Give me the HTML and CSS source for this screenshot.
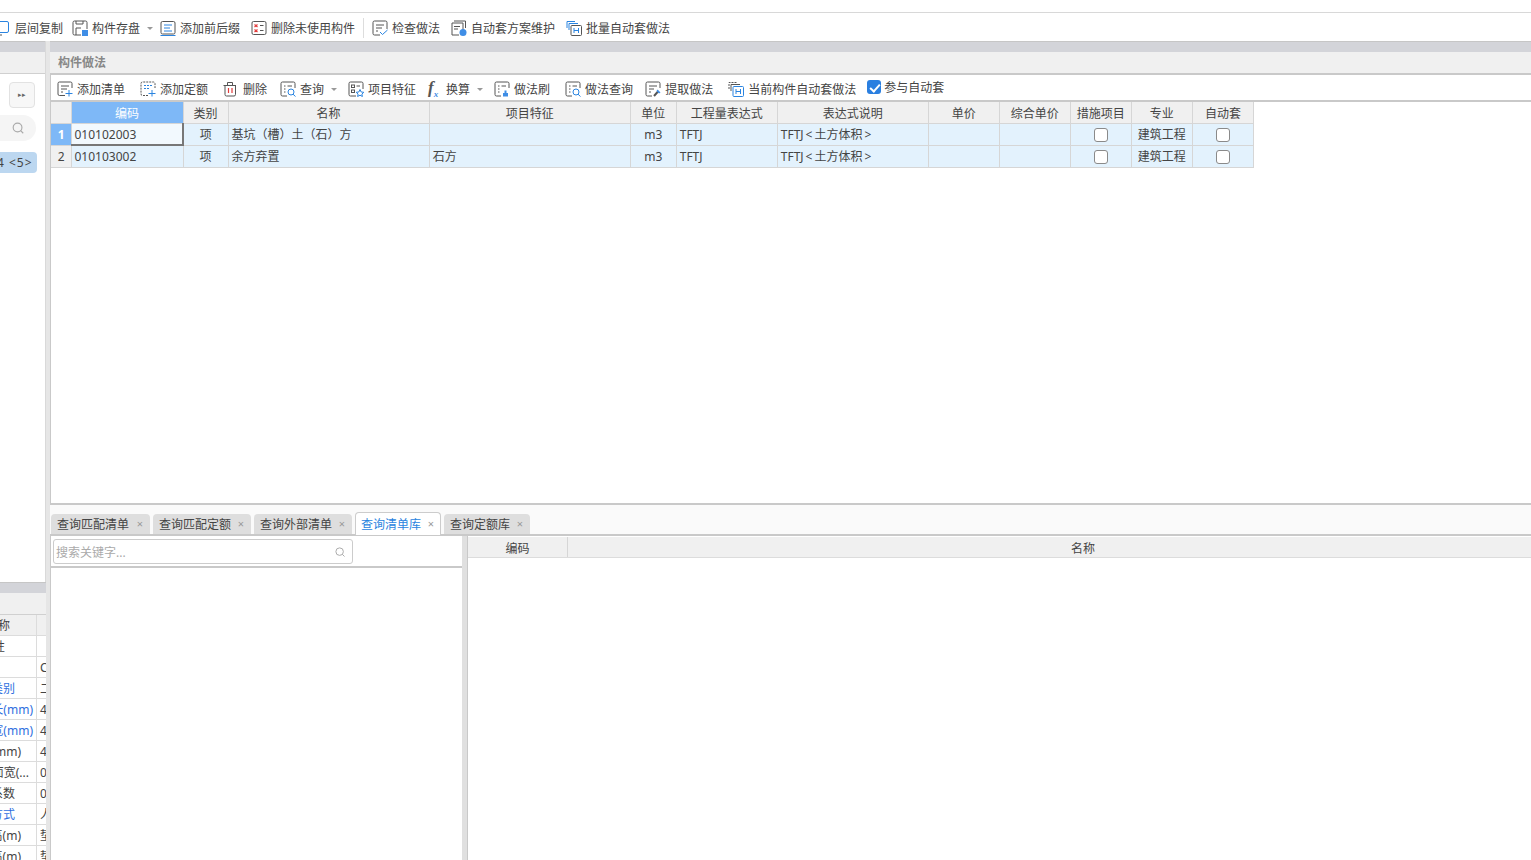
FILE: index.html
```html
<!DOCTYPE html>
<html lang="zh-CN">
<head>
  <meta charset="UTF-8">
  <title>构件做法</title>
  <link rel="stylesheet" href="styles.css">
</head>
<body>
  <svg class="icon-defs" width="0" height="0">
    <symbol id="i-copy" viewBox="0 0 16 16"><path class="b" d="M1 1.500h11a1.500 1.500 0 0 1 1.500 1.500v8a1.500 1.500 0 0 1-1.500 1.500H1"/><path class="g" d="M1 15h6"/></symbol>
    <symbol id="i-save" viewBox="0 0 16 16"><path class="g" d="M9 15H2.500A1.500 1.500 0 0 1 1 13.500v-11A1.500 1.500 0 0 1 2.500 1h11A1.500 1.500 0 0 1 15 2.500V9M4 15V8h5M4 1v3h7V1"/><path class="f" d="M10 10h6v6h-6z"/></symbol>
    <symbol id="i-affix" viewBox="0 0 16 16"><rect class="g" x="1" y="1.500" width="14" height="12.500" rx="1.500"/><path class="b" d="M4 5h8M4 8h6M4 11h8M.5 15.500h15"/></symbol>
    <symbol id="i-unused" viewBox="0 0 16 16"><rect class="g" x="1" y="1.500" width="14" height="13" rx="1.500"/><path class="r" d="M3.500 4.500l3 2.500m0-2.500l-3 2.500M3.500 9.500l3 2.500m0-2.500l-3 2.500"/><path class="g" d="M9 5.500h3.500M9 10.500h3.500"/></symbol>
    <symbol id="i-check" viewBox="0 0 16 16"><path class="g" d="M8 15H2.500A1.500 1.500 0 0 1 1 13.500v-11A1.500 1.500 0 0 1 2.500 1h11A1.500 1.500 0 0 1 15 2.500V9M4 5h8M4 8h6M4 11h2"/><path class="b" d="M8 12l2.500 2.500L15.500 10"/></symbol>
    <symbol id="i-scheme" viewBox="0 0 16 16"><path class="g" d="M3 1h11.500v7M1 3h11v8M1 3v12h7"/><path class="g" d="M3 6.500h6M3 9h4"/><circle class="f" cx="12" cy="12.500" r="3.500"/></symbol>
    <symbol id="i-batch" viewBox="0 0 16 16"><path class="b" d="M1 8V1.500h8M3 10V3.500h9"/><rect class="g" x="5" y="5.500" width="10.500" height="10" rx="1"/><path class="b" d="M8 8v5M12.500 8v5M8 10.500h4.500"/></symbol>
    <symbol id="i-list" viewBox="0 0 16 16"><path class="g" d="M8 14.500H2.500A1.500 1.500 0 0 1 1 13V2.500A1.500 1.500 0 0 1 2.500 1h11A1.500 1.500 0 0 1 15 2.500V7M4 5h8M4 8h6M4 11h2"/><path class="b" d="M12 9v6.500M8.500 12.500h7"/></symbol>
    <symbol id="i-quota" viewBox="0 0 16 16"><path class="g dash" d="M8 14.500H2.500A1.500 1.500 0 0 1 1 13V2.500A1.500 1.500 0 0 1 2.500 1h11A1.500 1.500 0 0 1 15 2.500V7"/><path class="b dash" d="M4 4.500h8M4 7.500h5"/><path class="b" d="M12 9v6.500M8.500 12.500h7"/></symbol>
    <symbol id="i-del" viewBox="0 0 16 16"><path class="g" d="M3 4.500h10.500v9A1.500 1.500 0 0 1 12 15H4.500A1.500 1.500 0 0 1 3 13.500zM1.500 4.500h12.500M5.500 4.500V1.500h5v3"/><path class="r" d="M6.500 7v5M10 7v5"/></symbol>
    <symbol id="i-query" viewBox="0 0 16 16"><path class="g" d="M7 15H2.500A1.500 1.500 0 0 1 1 13.500v-11A1.500 1.500 0 0 1 2.500 1h11A1.500 1.500 0 0 1 15 2.500V7M4 5h1.500M7.500 5H12M4 8h1.500M4 11h1.500"/><circle class="b" cx="11" cy="11" r="3"/><path class="b" d="M13 13.200l2.500 2.300"/></symbol>
    <symbol id="i-feature" viewBox="0 0 16 16"><path class="g" d="M8 15H2.500A1.500 1.500 0 0 1 1 13.500v-11A1.500 1.500 0 0 1 2.500 1h11A1.500 1.500 0 0 1 15 2.500V8"/><rect class="g" x="3.500" y="4" width="3" height="2.500"/><rect class="g" x="3.500" y="9" width="3" height="2.500"/><path class="g" d="M8.500 5H12"/><path class="b" d="M12 8.500l1.200 2.500 2.600.300-1.900 1.800.5 2.400-2.400-1.300-2.400 1.300.5-2.400-1.900-1.800 2.600-.300z"/></symbol>
    <symbol id="i-brush" viewBox="0 0 16 16"><path class="g" d="M7 15H2.500A1.500 1.500 0 0 1 1 13.500v-11A1.500 1.500 0 0 1 2.500 1h11A1.500 1.500 0 0 1 15 2.500V7M4 5h1.500M7.500 5H12M4 8h1.500M4 11h1.500"/><path class="f" d="M9 15.500v-3.500h1.500V9.500h2V12H14v3.500z"/></symbol>
    <symbol id="i-extract" viewBox="0 0 16 16"><path class="g" d="M7 15H2.500A1.500 1.500 0 0 1 1 13.500v-11A1.500 1.500 0 0 1 2.500 1h11A1.500 1.500 0 0 1 15 2.500V7M4 5h8M4 8h5M4 11h2"/><path class="g thick" d="M9 15l4.500-5"/><path class="f" d="M12.500 8.500l3 3-1.500 1-2.500-2.500z"/></symbol>
    <symbol id="i-current" viewBox="0 0 16 16"><path class="g dash" d="M1 8V1.500h8"/><path class="g" d="M3 10V3.500h9"/><rect class="b" x="5" y="5.500" width="10.500" height="10" rx="1"/><path class="b" d="M8 8v5M12.500 8v5M8 10.500h4.500"/></symbol>
    <symbol id="i-search" viewBox="0 0 16 16"><circle class="s" cx="7.500" cy="7.500" r="5"/><path class="s" d="M11 11l3 3"/></symbol>
  </svg>

  <div class="top-gap"></div>
  <div class="toolbar main-bar">
    <div class="tool gap-9"><svg class="ico"><use href="#i-copy"/></svg><span>层间复制</span></div>
    <div class="tool gap-10"><svg class="ico"><use href="#i-save"/></svg><span>构件存盘</span><i class="caret"></i></div>
    <div class="tool"><svg class="ico"><use href="#i-affix"/></svg><span>添加前后缀</span></div>
    <div class="tool"><svg class="ico"><use href="#i-unused"/></svg><span>删除未使用构件</span></div>
    <div class="sep"></div>
    <div class="tool"><svg class="ico"><use href="#i-check"/></svg><span>检查做法</span></div>
    <div class="tool"><svg class="ico"><use href="#i-scheme"/></svg><span>自动套方案维护</span></div>
    <div class="tool"><svg class="ico"><use href="#i-batch"/></svg><span>批量自动套做法</span></div>
  </div>

  <div class="workspace">
    <aside class="side">
      <div class="side-top">
        <div class="band"></div>
        <div class="panel-title"></div>
        <button class="collapse">▸▸</button>
        <div class="side-search"><svg class="search-ico"><use href="#i-search"/></svg></div>
        <div class="side-item">4 &lt;5&gt;</div>
      </div>
      <div class="side-bottom">
        <div class="band"></div>
        <div class="panel-title"></div>
        <div class="prop-row prop-head"><div class="prop-name end-10">名称</div><div class="prop-val"></div></div>
        <div class="prop-row"><div class="prop-name end-5">属性</div><div class="prop-val"></div></div>
        <div class="prop-row"><div class="prop-name"></div><div class="prop-val">C</div></div>
        <div class="prop-row"><div class="prop-name end-15 link">类别</div><div class="prop-val">二</div></div>
        <div class="prop-row"><div class="prop-name end-33 link">长(mm)</div><div class="prop-val">4</div></div>
        <div class="prop-row"><div class="prop-name end-33 link">宽(mm)</div><div class="prop-val">4</div></div>
        <div class="prop-row"><div class="prop-name end-21">高(mm)</div><div class="prop-val">4</div></div>
        <div class="prop-row"><div class="prop-name end-29">面宽(...</div><div class="prop-val">0</div></div>
        <div class="prop-row"><div class="prop-name end-15">系数</div><div class="prop-val">0</div></div>
        <div class="prop-row"><div class="prop-name end-15 link">方式</div><div class="prop-val">人</div></div>
        <div class="prop-row"><div class="prop-name end-21">高(m)</div><div class="prop-val">垫</div></div>
        <div class="prop-row"><div class="prop-name end-21">高(m)</div><div class="prop-val">垫</div></div>
      </div>
    </aside>
    <div class="splitter"></div>

    <main class="main">
      <div class="band"></div>
      <div class="panel-title">构件做法</div>
      <div class="toolbar sub-bar">
        <div class="tool gap-15"><svg class="ico"><use href="#i-list"/></svg><span>添加清单</span></div>
        <div class="tool"><svg class="ico"><use href="#i-quota"/></svg><span>添加定额</span></div>
        <div class="tool gap-13"><svg class="ico del-ico"><use href="#i-del"/></svg><span>删除</span></div>
        <div class="tool"><svg class="ico"><use href="#i-query"/></svg><span>查询</span><i class="caret"></i></div>
        <div class="tool narrow"><svg class="ico"><use href="#i-feature"/></svg><span>项目特征</span></div>
        <div class="tool"><em class="fx">f<sub>x</sub></em><span>换算</span><i class="caret"></i></div>
        <div class="tool gap-15"><svg class="ico"><use href="#i-brush"/></svg><span>做法刷</span></div>
        <div class="tool narrow"><svg class="ico"><use href="#i-query"/></svg><span>做法查询</span></div>
        <div class="tool gap-15"><svg class="ico"><use href="#i-extract"/></svg><span>提取做法</span></div>
        <div class="tool"><svg class="ico"><use href="#i-current"/></svg><span>当前构件自动套做法</span></div>
        <label class="auto-check"><i class="check-on"></i><span>参与自动套</span></label>
      </div>

      <div class="grid-area">
        <table class="grid">
          <colgroup>
            <col class="c-idx"><col class="c-code"><col class="c-type"><col class="c-name"><col class="c-name">
            <col class="c-unit"><col class="c-expr"><col class="c-desc"><col class="c-price"><col class="c-price">
            <col class="c-opt"><col class="c-opt"><col class="c-opt">
          </colgroup>
          <thead>
            <tr>
              <th></th><th class="active">编码</th><th>类别</th><th>名称</th><th>项目特征</th><th>单位</th>
              <th>工程量表达式</th><th>表达式说明</th><th>单价</th><th>综合单价</th><th>措施项目</th><th>专业</th><th>自动套</th>
            </tr>
          </thead>
          <tbody>
            <tr>
              <th class="active">1</th><td class="selected">010102003</td><td class="mid">项</td><td>基坑（槽）土（石）方</td><td></td><td class="mid">m3</td>
              <td>TFTJ</td><td>TFTJ&#8201;&lt;&#8201;土方体积&#8201;&gt;</td><td></td><td></td><td class="mid"><i class="box"></i></td><td class="mid">建筑工程</td><td class="mid"><i class="box"></i></td>
            </tr>
            <tr>
              <th>2</th><td>010103002</td><td class="mid">项</td><td>余方弃置</td><td>石方</td><td class="mid">m3</td>
              <td>TFTJ</td><td>TFTJ&#8201;&lt;&#8201;土方体积&#8201;&gt;</td><td></td><td></td><td class="mid"><i class="box"></i></td><td class="mid">建筑工程</td><td class="mid"><i class="box"></i></td>
            </tr>
          </tbody>
        </table>
      </div>

      <div class="tabs">
        <div class="tab"><span>查询匹配清单</span><b>×</b></div>
        <div class="tab"><span>查询匹配定额</span><b>×</b></div>
        <div class="tab"><span>查询外部清单</span><b>×</b></div>
        <div class="tab current"><span>查询清单库</span><b>×</b></div>
        <div class="tab short"><span>查询定额库</span><b>×</b></div>
      </div>

      <div class="lower">
        <div class="lib-left">
          <div class="lib-search">
            <div class="search-box"><span>搜索关键字...</span><svg class="search-ico"><use href="#i-search"/></svg></div>
          </div>
        </div>
        <div class="lib-right">
          <div class="lib-head"><div class="lib-code">编码</div><div class="lib-name">名称</div></div>
        </div>
      </div>
    </main>
  </div>
</body>
</html>
```

FILE: styles.css
```css
* {
  box-sizing: border-box;
}
html, body {
  margin: 0;
  height: 100%;
}
body {
  width: 1531px;
  height: 860px;
  overflow: hidden;
  display: flex;
  flex-direction: column;
  background: #fff;
  color: #444;
  font-family: "Noto Sans", "Noto Sans CJK SC", sans-serif;
  font-size: 12px;
  line-height: 16px;
}
.icon-defs {
  position: absolute;
}
.b, .g, .r, .s {
  fill: none;
  stroke-width: 1;
}
.b { stroke: #2a84e0; }
.g { stroke: #555; }
.r { stroke: #e23b3b; stroke-width: 1.200; }
.s { stroke: #aaa; stroke-width: 1.300; }
.f { fill: #3f8ee6; }
.dash { stroke-dasharray: 2 1; }
.thick { stroke-width: 2; }

.top-gap {
  height: 13px;
  flex: none;
  border-bottom: 1px solid #d8d8d8;
}

/* toolbars */
.toolbar {
  display: flex;
  align-items: center;
  flex: none;
  background: #fff;
}
.main-bar {
  height: 28px;
  margin-left: -5px;
  padding-top: 2px;
}
.tool {
  display: flex;
  align-items: center;
  margin-right: 11px;
  white-space: nowrap;
}
.tool span, .auto-check span {
  padding-top: 2px;
}
.tool.gap-9 { margin-right: 9px; }
.tool.gap-10 { margin-right: 10px; }
.ico {
  width: 16px;
  height: 16px;
  margin-right: 4px;
  flex: none;
}
.del-ico {
  margin-right: 5px;
}
.caret {
  width: 0;
  height: 0;
  margin: 1px -3px 0 7px;
  border: 3px solid transparent;
  border-top: 3px solid #999;
  border-bottom: 0;
}
.sep {
  width: 1px;
  height: 20px;
  margin: 0 8px 0 -3px;
  background: #ddd;
}

.workspace {
  flex: 1;
  display: flex;
  min-height: 0;
}
.band {
  height: 11px;
  flex: none;
  background: #d3d4d9;
  border-top: 1px solid #c6c6c6;
}
.panel-title {
  height: 23px;
  flex: none;
  padding: 3px 0 0 8px;
  background: #f0f0f0;
  border-bottom: 2px solid #c9c9c9;
  color: #888;
  font-weight: 700;
}

/* left panel */
.side {
  width: 46px;
  flex: none;
  display: flex;
  flex-direction: column;
  overflow: hidden;
}
.side-top {
  height: 541px;
  flex: none;
  position: relative;
  border-right: 1px solid #d9d9d9;
}
.side .panel-title {
  height: 22px;
  border-bottom: 1px solid #d0d0d0;
}
.collapse {
  display: block;
  width: 26px;
  height: 26px;
  margin: 8px 0 0 9px;
  padding: 0;
  background: #f7f7f7;
  border: 1px solid #e2e2e2;
  border-radius: 4px;
  color: #666;
  font-size: 7px;
  letter-spacing: 0;
}
.side-search {
  display: flex;
  align-items: center;
  justify-content: flex-end;
  width: 36px;
  height: 26px;
  margin-top: 7px;
  padding-right: 11px;
  background: #f5f5f5;
  border-radius: 0 13px 13px 0;
}
.side-search .search-ico {
  width: 14px;
  height: 14px;
  margin: 0;
}
.side-item {
  width: 37px;
  height: 21px;
  margin-top: 11px;
  padding-top: 3px;
  background: #bcd7f0;
  border-radius: 0 4px 4px 0;
  color: #444;
  letter-spacing: 1px;
  text-indent: -3px;
  white-space: nowrap;
}
.side-bottom {
  flex: 1;
  overflow: hidden;
}
.prop-row {
  display: flex;
  height: 21px;
  border-bottom: 1px solid #dcdcdc;
}
.prop-head {
  background: #f0f0f0;
}
.prop-name {
  width: 37px;
  flex: none;
  display: flex;
  justify-content: flex-end;
  align-items: center;
  padding-top: 2px;
  overflow: hidden;
  white-space: nowrap;
  border-right: 1px solid #dcdcdc;
}
.end-5 { padding-right: 31px; }
.end-10 { padding-right: 26px; }
.end-15 { padding-right: 21px; }
.end-21 { padding-right: 15px; }
.end-29 { padding-right: 7px; }
.end-33 { padding-right: 3px; }
.link { color: #2f6fe0; }
.prop-val {
  flex: 1;
  padding: 3px 0 0 3px;
  overflow: hidden;
  white-space: nowrap;
}
.splitter {
  width: 4px;
  flex: none;
  background: #e6e6e6;
}

/* main panel */
.main {
  flex: 1;
  min-width: 0;
  display: flex;
  flex-direction: column;
}
.sub-bar {
  height: 27px;
  padding: 2px 0 0 6px;
  border-bottom: 2px solid #c9c9c9;
  border-left: 1px solid #c9c9c9;
}
.sub-bar .tool {
  margin-right: 14px;
}
.sub-bar .tool.narrow {
  margin-right: 12px;
}
.sub-bar .tool.gap-13 {
  margin-right: 13px;
}
.sub-bar .tool.gap-15 {
  margin-right: 15px;
}
.fx {
  width: 14px;
  margin: -2px 4px 0 0;
  color: #555;
  font-family: "Liberation Serif", serif;
  font-size: 17px;
  font-style: italic;
  font-weight: 700;
}
.fx sub {
  font-size: 9px;
  color: #3f8ee6;
  line-height: 0;
}
.auto-check {
  display: flex;
  align-items: center;
  margin: -3px 0 0 -3px;
}
.check-on {
  position: relative;
  width: 14px;
  height: 14px;
  margin-right: 3px;
  background: #2a7fe0;
  border-radius: 3px;
}
.check-on::after {
  content: "";
  position: absolute;
  left: 5px;
  top: 2px;
  width: 4px;
  height: 8px;
  border: solid #fff;
  border-width: 0 2px 2px 0;
  transform: rotate(42deg);
}
.grid-area {
  height: 403px;
  flex: none;
  border-left: 1px solid #c9c9c9;
  border-bottom: 2px solid #c9c9c9;
}
.grid {
  width: 1203px;
  table-layout: fixed;
  border-collapse: collapse;
}
.c-idx { width: 20px; }
.c-code { width: 112px; }
.c-type { width: 45px; }
.c-name { width: 201px; }
.c-unit { width: 46px; }
.c-expr { width: 101px; }
.c-desc { width: 151px; }
.c-price { width: 71px; }
.c-opt { width: 61px; }
.grid tr {
  height: 22px;
}
.grid th, .grid td {
  height: 22px;
  padding: 2px 2px 0 3px;
  border: 1px solid #d6d6d6;
  white-space: nowrap;
  overflow: hidden;
}
.grid th {
  background: #f0f0f0;
  font-weight: 400;
  text-align: center;
}
.grid thead tr, .grid thead th {
  height: 21px;
}
.grid thead th {
  padding: 4px 2px 0;
  border-top: 0;
}
.grid thead th:first-child {
  border-left: 0;
  border-top: 0;
}
.grid tbody th {
  border-left: 0;
}
.grid td {
  background: #e3f2fd;
}
.grid .active {
  background: #7eb8f7;
  color: #fff;
}
.grid tbody .active {
  font-weight: 700;
}
.grid .selected {
  background: #f2f9fe;
  border-right: 2px solid #777;
  border-bottom: 2px solid #777;
}
.grid .mid {
  padding: 2px 2px 0;
  text-align: center;
}
.box {
  display: block;
  width: 14px;
  height: 14px;
  margin: -1px auto 0;
  background: #fff;
  border: 1px solid #8a8a8a;
  border-radius: 3px;
}

/* lookup tabs */
.tabs {
  display: flex;
  align-items: flex-end;
  gap: 3px;
  height: 31px;
  flex: none;
  background: #fafafa;
  border-bottom: 2px solid #c9c9c9;
}
.tab {
  display: flex;
  align-items: center;
  justify-content: space-between;
  width: 98px;
  height: 20px;
  padding: 0 7px 0 6px;
  background: #dedede;
  border-radius: 4px 4px 0 0;
  white-space: nowrap;
}
.tab span {
  padding-top: 2px;
}
.tab:first-child {
  margin-left: 1px;
  width: 99px;
}
.tab.short, .tab.current {
  width: 86px;
}
.tab b {
  color: #999;
  font-weight: 400;
  font-size: 11px;
}
.tab.current {
  height: 23px;
  margin-bottom: -1px;
  padding: 0 6px 0 5px;
  background: #fff;
  border: 1px solid #ccc;
  border-bottom: 0;
  color: #2a84e0;
}

.lower {
  flex: 1;
  display: flex;
  min-height: 0;
}
.lib-left {
  width: 417px;
  flex: none;
  border-left: 1px solid #c9c9c9;
  border-right: 5px solid #e0e0e0;
}
.lib-search {
  height: 32px;
  padding: 3px 0 0 2px;
  border-bottom: 2px solid #c9c9c9;
}
.search-box {
  display: flex;
  align-items: center;
  justify-content: space-between;
  width: 300px;
  height: 25px;
  padding: 0 6px 0 2px;
  border: 1px solid #ccc;
  border-radius: 3px;
  color: #aaa;
}
.search-box span {
  padding-top: 2px;
}
.search-ico {
  width: 12px;
  height: 12px;
}
.lib-right {
  flex: 1;
  min-width: 0;
  overflow: hidden;
  border-left: 1px solid #c9c9c9;
}
.lib-head {
  display: flex;
  width: 1130px;
  height: 21px;
  margin-top: 1px;
  background: #f0f0f0;
  border-bottom: 1px solid #dcdcdc;
  text-align: center;
  line-height: 23px;
}
.lib-code {
  width: 100px;
  border-right: 1px solid #d6d6d6;
}
.lib-name {
  flex: 1;
}
```
